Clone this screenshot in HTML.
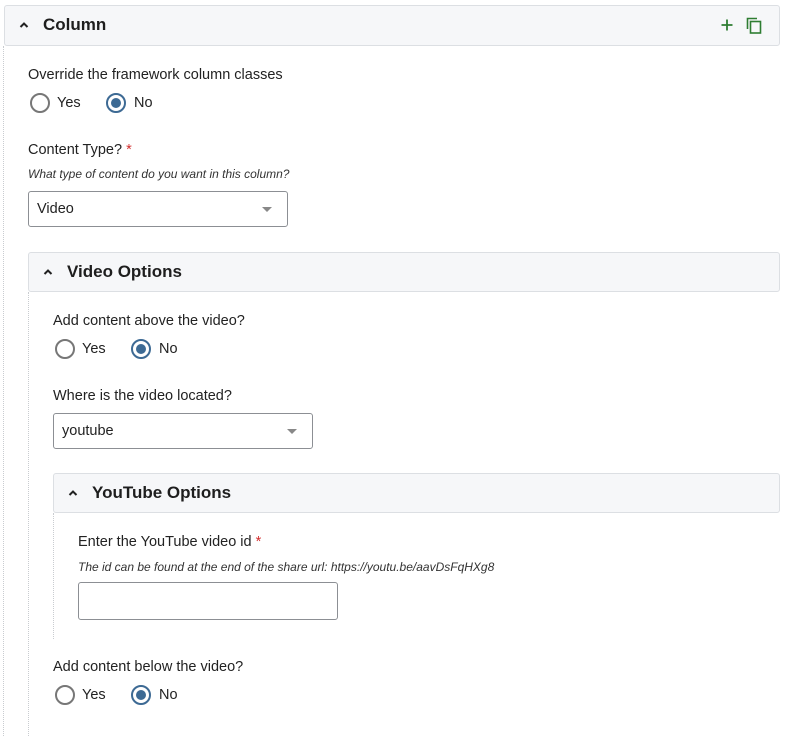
<!DOCTYPE html>
<html><head><meta charset="utf-8"><style>
*{box-sizing:border-box;margin:0;padding:0}
body{width:785px;height:736px;background:#fff;position:relative;overflow:hidden;font-family:"Liberation Sans",Arial,sans-serif;color:#222;font-size:14.5px}
.hdr{position:absolute;background:#f6f7f9;border:1px solid #dcdfe3;border-radius:3px}
.hdr .t{position:absolute;left:38px;top:9px;font-weight:bold;font-size:17px;color:#1e1e1e}
.hdr svg.c{position:absolute;left:14px;top:15px}
.dot{position:absolute;width:0;border-left:1px dotted #c9ccd0}
.lbl{position:absolute;font-size:14.5px;line-height:18px;white-space:nowrap}
.req{color:#d32f2f}
.help{position:absolute;font-size:12px;font-style:italic;color:#333;white-space:nowrap}
.sel{position:absolute;border:1px solid #8c8f94;border-radius:3px;background:#fff;width:260px;height:36px}
.sel span{position:absolute;left:8px;top:9px;font-size:14.5px}
.sel i{position:absolute;right:15px;top:15px;width:0;height:0;border-left:5.5px solid transparent;border-right:5.5px solid transparent;border-top:5.5px solid #888}
.r{position:absolute;width:20px;height:20px;border-radius:50%;border:2px solid #777;background:#fff}
.r.on{border-color:#3d6a94}
.r.on:after{content:"";position:absolute;left:3px;top:3px;width:10px;height:10px;border-radius:50%;background:#3d6a94}
</style></head><body>

<div class="dot" style="left:3px;top:46px;height:690px"></div>
<div class="hdr" style="left:4px;top:5px;width:776px;height:41px">
<svg class="c" width="10" height="8" viewBox="0 0 10 8"><path d="M1.5 6 L5 2.5 L8.5 6" fill="none" stroke="#222" stroke-width="2"/></svg>
<div class="t">Column</div>
<svg style="position:absolute;left:715px;top:12px" width="14" height="14" viewBox="0 0 14 14"><path d="M7 1.5V12.5M1.5 7H12.5" stroke="#2e7d32" stroke-width="1.8"/></svg>
<svg style="position:absolute;left:741px;top:11px" width="16" height="17" viewBox="0 0 16 17"><path d="M1.5 12V1.5H11" fill="none" stroke="#2e7d32" stroke-width="1.6"/><rect x="4.5" y="4.5" width="10" height="11.5" fill="none" stroke="#2e7d32" stroke-width="1.6"/></svg>
</div>

<div class="lbl" style="left:28px;top:66px">Override the framework column classes</div>
<div class="r" style="left:30px;top:93px"></div><div class="lbl" style="left:57px;top:94px">Yes</div>
<div class="r on" style="left:106px;top:93px"></div><div class="lbl" style="left:134px;top:94px">No</div>

<div class="lbl" style="left:28px;top:141px">Content Type? <span class="req">*</span></div>
<div class="help" style="left:28px;top:167px">What type of content do you want in this column?</div>
<div class="sel" style="left:28px;top:191px"><span>Video</span><i></i></div>

<div class="dot" style="left:28px;top:292px;height:444px"></div>
<div class="hdr" style="left:28px;top:252px;width:752px;height:40px">
<svg class="c" width="10" height="8" viewBox="0 0 10 8"><path d="M1.5 6 L5 2.5 L8.5 6" fill="none" stroke="#222" stroke-width="2"/></svg>
<div class="t">Video Options</div></div>

<div class="lbl" style="left:53px;top:312px">Add content above the video?</div>
<div class="r" style="left:55px;top:339px"></div><div class="lbl" style="left:82px;top:340px">Yes</div>
<div class="r on" style="left:131px;top:339px"></div><div class="lbl" style="left:159px;top:340px">No</div>

<div class="lbl" style="left:53px;top:387px">Where is the video located?</div>
<div class="sel" style="left:53px;top:413px"><span>youtube</span><i></i></div>

<div class="dot" style="left:53px;top:513px;height:126px"></div>
<div class="hdr" style="left:53px;top:473px;width:727px;height:40px">
<svg class="c" width="10" height="8" viewBox="0 0 10 8"><path d="M1.5 6 L5 2.5 L8.5 6" fill="none" stroke="#222" stroke-width="2"/></svg>
<div class="t">YouTube Options</div></div>

<div class="lbl" style="left:78px;top:533px">Enter the YouTube video id <span class="req">*</span></div>
<div class="help" style="left:78px;top:560px">The id can be found at the end of the share url: https://youtu.be/aavDsFqHXg8</div>
<div class="sel" style="left:78px;top:582px;height:38px"></div>

<div class="lbl" style="left:53px;top:658px">Add content below the video?</div>
<div class="r" style="left:55px;top:685px"></div><div class="lbl" style="left:82px;top:686px">Yes</div>
<div class="r on" style="left:131px;top:685px"></div><div class="lbl" style="left:159px;top:686px">No</div>

</body></html>
